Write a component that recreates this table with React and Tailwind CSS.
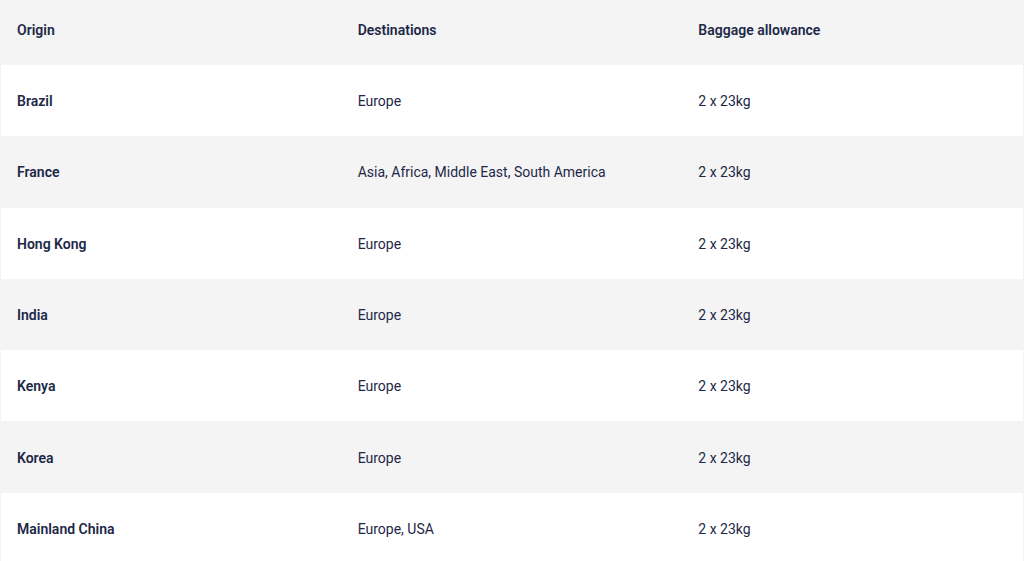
import React from "react";

const rows = [
  { origin: "Brazil", dest: "Europe", bag: "2 x 23kg" },
  { origin: "France", dest: "Asia, Africa, Middle East, South America", bag: "2 x 23kg" },
  { origin: "Hong Kong", dest: "Europe", bag: "2 x 23kg" },
  { origin: "India", dest: "Europe", bag: "2 x 23kg" },
  { origin: "Kenya", dest: "Europe", bag: "2 x 23kg" },
  { origin: "Korea", dest: "Europe", bag: "2 x 23kg" },
  { origin: "Mainland China", dest: "Europe, USA", bag: "2 x 23kg" },
];

export default function App() {
  return (
    <div className="min-h-screen bg-[#f4f4f4] px-px text-[14px] text-[#1d2848] font-['Roboto',sans-serif]">
      <table className="w-full table-fixed border-collapse">
        <thead>
          <tr className="h-[65px]">
            <th className="pl-4 pb-1 text-left font-semibold">Origin</th>
            <th className="pl-4 pb-1 text-left font-semibold">Destinations</th>
            <th className="pl-4 pb-1 text-left font-semibold">Baggage allowance</th>
          </tr>
        </thead>
        <tbody>
          {rows.map((r, i) => (
            <tr key={r.origin} className={`h-[71.3px] ${i % 2 === 0 ? "bg-white" : "bg-[#f4f4f4]"}`}>
              <td className="pl-4 pt-0.5 font-semibold">{r.origin}</td>
              <td className="pl-4 pt-0.5">{r.dest}</td>
              <td className="pl-4 pt-0.5">{r.bag}</td>
            </tr>
          ))}
        </tbody>
      </table>
    </div>
  );
}
